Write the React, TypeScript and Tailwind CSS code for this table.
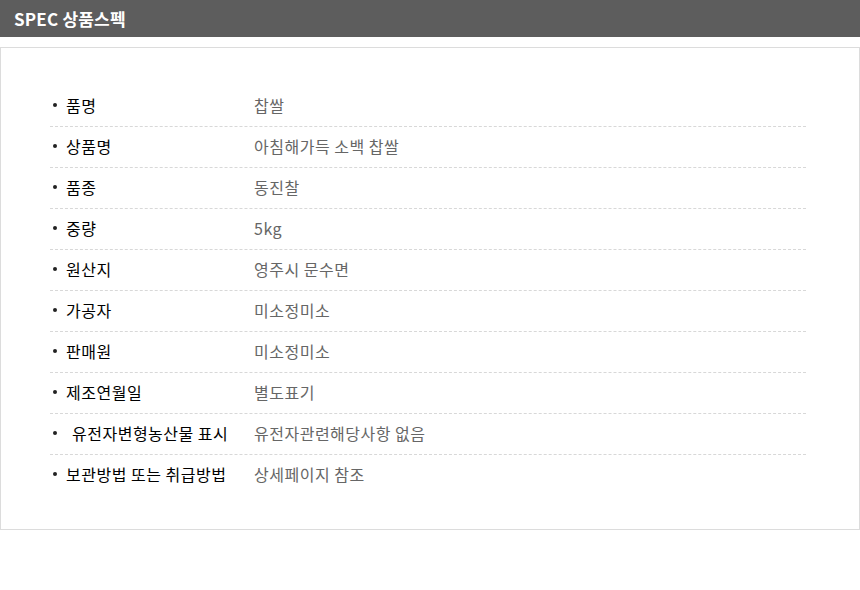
const specs: [string, string, boolean?][] = [
  ["품명", "찹쌀"],
  ["상품명", "아침해가득 소백 찹쌀"],
  ["품종", "동진찰"],
  ["중량", "5kg"],
  ["원산지", "영주시 문수면"],
  ["가공자", "미소정미소"],
  ["판매원", "미소정미소"],
  ["제조연월일", "별도표기"],
  ["유전자변형농산물 표시", "유전자관련해당사항 없음", true],
  ["보관방법 또는 취급방법", "상세페이지 참조"],
];

export default function App() {
  return (
    <div className="w-[860px] h-[590px] bg-white" style={{ fontFamily: '"Noto Sans CJK KR", "Noto Sans", sans-serif' }}>
      <div className="h-[37px] bg-[#5d5d5d] flex items-center px-[14px]">
        <span className="text-white text-[17px] font-bold tracking-[0.2px]">SPEC 상품스펙</span>
      </div>
      <div className="mt-[10px] border border-[#dcdcdc] pt-[38px] pb-[33px]">
        <ul className="ml-[49px] w-[756px]">
          {specs.map(([label, value, indent], i) => (
            <li
              key={i}
              className={`flex items-center h-[41px] pb-[3px] ${i < specs.length - 1 ? "border-b border-dashed border-[#d8d8d8]" : ""}`}
            >
              <span className="w-[204px] flex items-center text-[16px] text-black tracking-[0.5px]">
                <span className="w-[4px] h-[4px] rounded-full bg-[#222] ml-[3px] mr-[9px]" />
                <span className={indent ? "ml-[6px]" : ""}>{label}</span>
              </span>
              <span className="text-[16px] text-[#666] tracking-[0.5px]">{value}</span>
            </li>
          ))}
        </ul>
      </div>
    </div>
  );
}
